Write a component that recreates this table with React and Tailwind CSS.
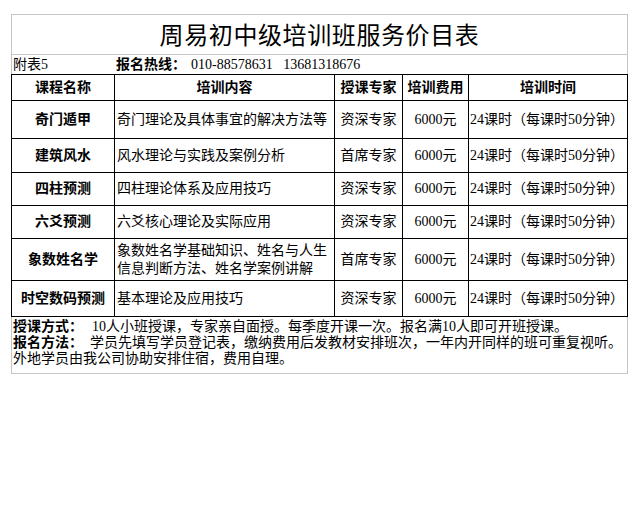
import { Fragment } from 'react';

const cjk = { fontFamily: '"Liberation Serif", "Noto Sans CJK SC", serif' };

const courses = [
  { name: '奇门遁甲', content: '奇门理论及具体事宜的解决方法等', expert: '资深专家' },
  { name: '建筑风水', content: '风水理论与实践及案例分析', expert: '首席专家' },
  { name: '四柱预测', content: '四柱理论体系及应用技巧', expert: '资深专家' },
  { name: '六爻预测', content: '六爻核心理论及实际应用', expert: '资深专家' },
  { name: '象数姓名学', content: '象数姓名学基础知识、姓名与人生信息判断方法、姓名学案例讲解', expert: '首席专家' },
  { name: '时空数码预测', content: '基本理论及应用技巧', expert: '资深专家' },
];

const cell = 'border-r border-b border-black flex items-center';

function App() {
  return (
    <div className="w-[640px] h-[512px] bg-white text-black" style={cjk}>
      <div className="ml-[11px] pt-[14px] w-[617px]">
        <div className="h-[41px] border border-[#c6c6c6] flex items-center justify-center pt-[2px] text-[24px] tracking-[0.6px] leading-none">
          周易初中级培训班服务价目表
        </div>
        <div className="h-[19px] border-x border-[#c6c6c6] flex items-center text-[14px] leading-none">
          <span className="w-[104px] pl-[1px]">附表5</span>
          <span className="font-bold">报名热线：</span>
          <span className="ml-[5px] whitespace-pre">010-88578631   13681318676</span>
        </div>
        <div className="grid grid-cols-[103px_220px_68px_66px_159px] grid-rows-[26px_38px_34px_33px_33px_42px_36px] border-t border-l border-black text-[14px] leading-[18px]">
          <div className={`${cell} justify-center font-bold`}>课程名称</div>
          <div className={`${cell} justify-center font-bold`}>培训内容</div>
          <div className={`${cell} justify-center font-bold`}>授课专家</div>
          <div className={`${cell} justify-center font-bold`}>培训费用</div>
          <div className={`${cell} justify-center font-bold`}>培训时间</div>
          {courses.map((c) => (
            <Fragment key={c.name}>
              <div className={`${cell} justify-center font-bold`}>{c.name}</div>
              <div className={`${cell} px-[2px]`}>{c.content}</div>
              <div className={`${cell} justify-center`}>{c.expert}</div>
              <div className={`${cell} justify-center`}>6000元</div>
              <div className={`${cell} pl-[1px]`}>24课时（每课时50分钟）</div>
            </Fragment>
          ))}
        </div>
        <div className="h-[57px] border-x border-b border-[#c6c6c6] pl-[1px] pt-[2px] text-[14px] leading-[16px]">
          <p><span className="font-bold">授课方式：</span><span className="ml-[9px]">10人小班授课，专家亲自面授。每季度开课一次。报名满10人即可开班授课。</span></p>
          <p><span className="font-bold">报名方法：</span><span className="ml-[7px]">学员先填写学员登记表，缴纳费用后发教材安排班次，一年内开同样的班可重复视听。</span></p>
          <p>外地学员由我公司协助安排住宿，费用自理。</p>
        </div>
      </div>
    </div>
  );
}

export default App;
